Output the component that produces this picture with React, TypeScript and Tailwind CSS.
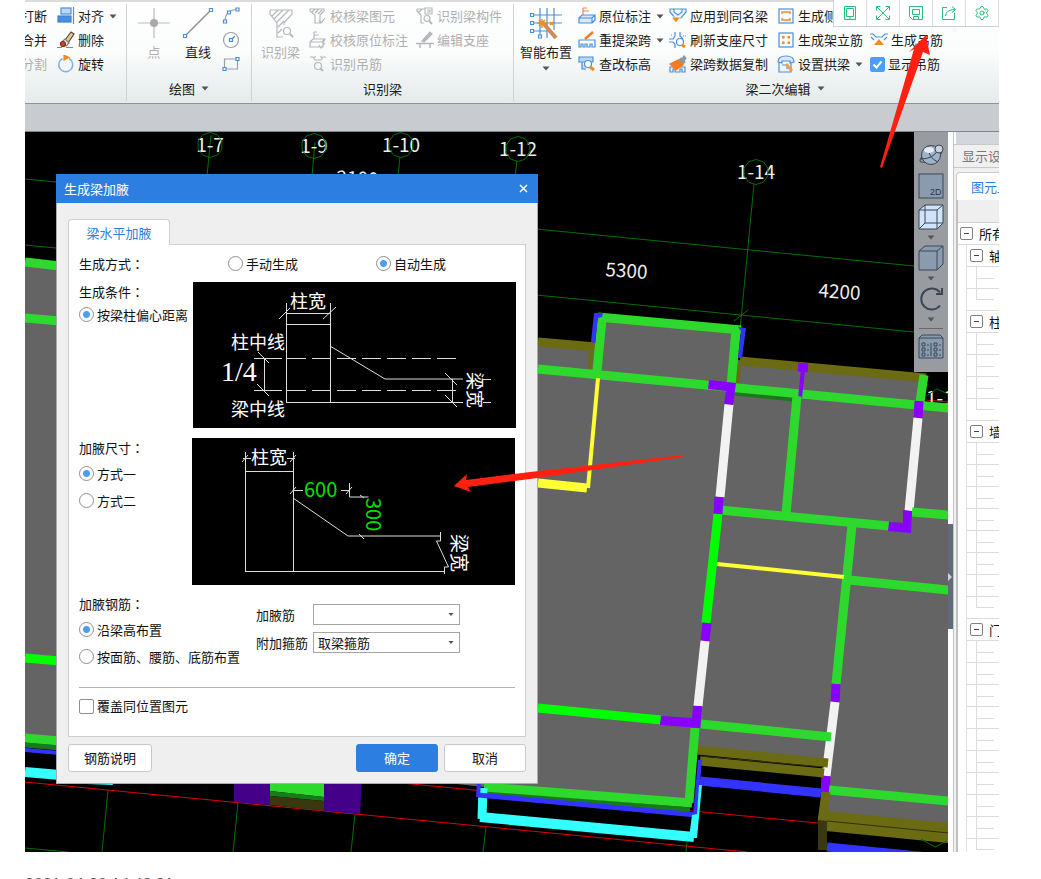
import React from "react";
import { Settings } from "lucide-react";

const BLUE = "#4a90d9";
const GREY = "#b4b8bb";
const ORANGE = "#f08a24";

function Caret({ className = "" }: { className?: string }) {
  return (
    <svg viewBox="0 0 8 5" className={"h-[5px] w-2 shrink-0 " + className} fill="#555">
      <path d="M0.5 0.5h7L4 4.5z" />
    </svg>
  );
}

function Glyph({ children }: { children?: React.ReactNode }) {
  return (
    <svg viewBox="0 0 18 18" className="size-[18px] shrink-0" fill="none" stroke={BLUE} strokeWidth="1.2">
      {children}
    </svg>
  );
}

/* ---------- ribbon glyphs ---------- */
const AlignIcon = (
  <Glyph>
    <rect x="4" y="1" width="10" height="6" fill="#bcd7f5" />
    <rect x="1" y="9" width="13" height="6" fill="#4a90e2" stroke="#3c7fd0" />
    <path d="M16.500 0v17" />
  </Glyph>
);
const EraseIcon = (
  <Glyph>
    <path d="M0 16.500h5M9 16.500h7" stroke="#888" />
    <path d="M8 9l6-8 3 2-6 9z" fill="#e8c890" stroke="#5b4a33" />
    <path d="M5 11l3-3 4 4-3 3z" fill="#fff" stroke="#777" />
    <circle cx="6" cy="13" r="2.500" fill="#c9461f" stroke="#8c2f14" />
  </Glyph>
);
const RotateIcon = (
  <Glyph>
    <path d="M12 3.500a7 7 0 1 1-6.500 0" strokeWidth="1.500" stroke="#7fb0e6" />
    <path d="M7 0l5 2.500-5 2.500z" fill={ORANGE} stroke={ORANGE} />
  </Glyph>
);
const ArcIcon = (
  <Glyph>
    <path d="M3 14.500Q3 3 15 2.500" stroke="#999" />
    <path d="M1.500 13h3v3h-3zM5.500 4h3v3h-3zM14 1h3v3h-3z" fill="#fff" />
  </Glyph>
);
const CircleIcon = (
  <Glyph>
    <circle cx="9" cy="9" r="7.500" stroke="#9aa0a6" />
    <path d="M9 9l4-4" />
    <rect x="7.500" y="7.500" width="3" height="3" fill="#fff" />
  </Glyph>
);
const RectIcon = (
  <Glyph>
    <path d="M2.500 4h13v10h-13z" stroke="#9aa0a6" />
    <path d="M1 12.500h3v3H1zM14 2.500h3v3h-3z" fill="#fff" />
  </Glyph>
);
const FunnelCheck = (
  <Glyph>
    <g stroke={GREY}>
      <path d="M1 2h14v2l-4 4v8H6V8L1 4zM3 5l3-3M6 6l4-4M9 7l4-4" />
      <path d="M10 13l2 3 4-5" />
    </g>
  </Glyph>
);
const BlockGrey = (
  <Glyph>
    <g stroke={GREY}>
      <path d="M1 11l3-3h12l-2 4v4H1zM1 11h12l3-3M5 8V1M5 4h5M5 1h3M10 14l2 3 4-5" />
    </g>
  </Glyph>
);
const HangFind = (
  <Glyph>
    <g stroke={GREY}>
      <path d="M1 2h3l2 3h6l2-3h3M6 1v2M12 1v2" />
      <circle cx="9" cy="11" r="3.500" />
      <path d="M11.500 13.500l2.500 2.500" strokeWidth="2" />
    </g>
  </Glyph>
);
const FunnelFind = (
  <Glyph>
    <g stroke={GREY}>
      <path d="M1 2h8M1 2v2l4 4v8h3M2 6l4-4M9 1h7v6H9zM11 3h3v2h-3" />
      <circle cx="11" cy="11.500" r="3" />
      <path d="M13 14l3 3" strokeWidth="2" />
    </g>
  </Glyph>
);
const EditSeat = (
  <Glyph>
    <g stroke={GREY}>
      <path d="M0 12.500h18M4 13v4M14 13v4" strokeWidth="1.500" />
      <path d="M6 10l8-9 2 2-8 8z" fill={GREY} />
    </g>
  </Glyph>
);
const BlockIcon = (
  <Glyph>
    <path d="M1 11l3-3h13l-3 3v5H1zM1 11h13v5M14 16l3-3V8" fill="#dbeafb" />
    <path d="M5 8V1M5 4h6M5 1h4" stroke="#e58a5a" />
  </Glyph>
);
const SpanIcon = (
  <Glyph>
    <path d="M1 16V9h16v7h-3v-3h-2v3H9v-3H7v3H5v-3H3v3z" fill="#fff" />
    <path d="M7 8l8-7" stroke="#f47b20" strokeWidth="2.500" />
  </Glyph>
);
const QueryIcon = (
  <Glyph>
    <path d="M1 2h14v5H1zM4 7v7h4" fill="#bcd7f5" />
    <circle cx="10" cy="9" r="3.500" fill="#fff" />
    <path d="M12 12l4 3" stroke={ORANGE} strokeWidth="3" />
  </Glyph>
);
const ApplyIcon = (
  <Glyph>
    <path d="M1 2h16v3l-5 6H6L1 5zM5 2v3l4 3 4-3V2" fill="#eaf3fd" />
    <path d="M2.500 10h9L7 16z" fill={ORANGE} stroke="#fff" strokeWidth="0.8" />
  </Glyph>
);
const RefreshIcon = (
  <Glyph>
    <path d="M6 1v4L4 8H0M11 1v4l3 3M6 17v-4l-2-2H0" />
    <path d="M2 4h2M14 5h3" strokeDasharray="1 1" />
    <circle cx="11" cy="11" r="3.500" fill="#fff" />
    <path d="M13 14l3 2" stroke={ORANGE} strokeWidth="3" />
  </Glyph>
);
const BrushIcon = (
  <Glyph>
    <path d="M1 17v-5h15v5h-3v-3h-2v3H6v-3H4v3z" />
    <path d="M10 5l2-2 1 1 2-3 2 2-2 3 1 1-2 2z" fill="#8d98a5" stroke="#8d98a5" />
    <path d="M1 9l8-4 5 5-7 5z" fill="#f47b20" stroke="#f47b20" />
  </Glyph>
);
const SideIcon = (
  <Glyph>
    <rect x="2" y="2" width="14" height="14" fill="#fff" />
    <path d="M5 7V5h8v2M5 11v2h8v-2" stroke={ORANGE} strokeWidth="1.500" />
  </Glyph>
);
const DotsIcon = (
  <Glyph>
    <rect x="2" y="2" width="14" height="14" fill="#fff" />
    <path d="M5 5h2.500v2.500H5zM10.500 5H13v2.500h-2.500zM5 10.500h2.500V13H5zM10.500 10.500H13V13h-2.500z" fill={ORANGE} stroke="none" />
  </Glyph>
);
const ArchIcon = (
  <Glyph>
    <path d="M1 7Q1 1 9 1t8 6l-4 1V6H5v2z" fill="#dbeafb" />
    <path d="M2 8v9h12V8M5 10h5v4" />
    <path d="M9 9l6 7" stroke="#f0a050" strokeWidth="3" />
  </Glyph>
);
const HangIcon = (
  <Glyph>
    <path d="M0 3h3l3 3h6l3-3h3M1 6l3 3M17 6l-3 3" />
    <path d="M9 8l5 6H4z" fill={ORANGE} stroke="none" />
  </Glyph>
);

type ToolProps = { icon?: React.ReactNode; label: string; caret?: boolean; disabled?: boolean };

function Tool({ icon, label, caret, disabled }: ToolProps) {
  return (
    <button
      type="button"
      disabled={disabled}
      className="flex h-6 items-center gap-[3px] whitespace-nowrap text-[#1c1c1c] disabled:text-[#b0b0b0]"
    >
      {icon}
      <span>{label}</span>
      {caret && <Caret className="ml-[2px]" />}
    </button>
  );
}

function BigTool({
  label,
  caret,
  disabled,
  className,
  children,
}: {
  label: string;
  caret?: boolean;
  disabled?: boolean;
  className: string;
  children: React.ReactNode;
}) {
  return (
    <button
      type="button"
      disabled={disabled}
      className={
        "flex shrink-0 flex-col items-center whitespace-nowrap text-[#1c1c1c] disabled:text-[#b0b0b0] " + className
      }
    >
      <svg viewBox="0 0 32 32" className="mt-[3px] size-8" fill="none" strokeWidth="1.2">
        {children}
      </svg>
      <span className="mt-1 leading-[18px]">{label}</span>
      {caret && <Caret className="mt-[5px]" />}
    </button>
  );
}

function Group({
  title,
  caret,
  className,
  children,
}: {
  title?: string;
  caret?: boolean;
  className: string;
  children: React.ReactNode;
}) {
  return (
    <section className={"my-[2px] flex flex-col " + className}>
      <div className="flex h-[72px]">{children}</div>
      <div className="flex flex-1 items-center justify-center gap-[6px] text-[#1c1c1c]">
        {title}
        {caret && <Caret />}
      </div>
    </section>
  );
}

function Ribbon() {
  return (
    <header className="flex h-[104px] shrink-0 overflow-hidden border-t-2 border-b border-t-[#dcdcdc] border-b-[#8c9696] bg-linear-to-b from-white via-[#fbfcfc] to-[#e4eaea]">
      <Group className="w-[102px] shrink-0 border-r border-[#cfd3d3]">
        <div className="flex w-[32px] flex-col items-end overflow-hidden pr-[10px]">
          <Tool label="打断" />
          <Tool label="合并" />
          <Tool label="分割" disabled />
        </div>
        <div className="flex flex-col">
          <Tool icon={AlignIcon} label="对齐" caret />
          <Tool icon={EraseIcon} label="删除" />
          <Tool icon={RotateIcon} label="旋转" />
        </div>
      </Group>

      <Group title="绘图" caret className="w-[125px] shrink-0 border-r border-[#cfd3d3]">
        <BigTool label="点" disabled className="w-[54px]">
          <path d="M0 16h32M16 1v30" stroke="#bbb" />
          <circle cx="16" cy="16" r="4" fill="#aaa" />
        </BigTool>
        <BigTool label="直线" className="w-[34px]">
          <path d="M3 29L29 3" stroke="#888" />
          <path d="M1.500 27.500h3v3h-3zM27.500 1.500h3v3h-3z" fill="#fff" stroke={BLUE} />
        </BigTool>
        <div className="flex flex-col gap-[6px] pt-[3px] pl-[7px]">
          <button type="button" aria-label="弧">{ArcIcon}</button>
          <button type="button" aria-label="圆">{CircleIcon}</button>
          <button type="button" aria-label="矩形">{RectIcon}</button>
        </div>
      </Group>

      <Group title="识别梁" className="w-[262px] shrink-0 border-r border-[#cfd3d3]">
        <BigTool label="识别梁" disabled className="w-[57px]">
          <g stroke={GREY}>
            <path d="M5 3h22v4l-8 9v2M5 3v4l7 9v14h6M7 9l6-6M9 12l9-9M12 15L24 3M13 20l6-6M13 26l4-4" />
            <circle cx="22" cy="24" r="3.500" />
            <path d="M25 27l3 3" strokeWidth="2" />
          </g>
        </BigTool>
        <div className="w-[107px]">
          <Tool icon={FunnelCheck} label="校核梁图元" disabled />
          <Tool icon={BlockGrey} label="校核原位标注" disabled />
          <Tool icon={HangFind} label="识别吊筋" disabled />
        </div>
        <div>
          <Tool icon={FunnelFind} label="识别梁构件" disabled />
          <Tool icon={EditSeat} label="编辑支座" disabled />
        </div>
      </Group>

      <Group title="梁二次编辑" caret className="w-[542px] shrink-0">
        <BigTool label="智能布置" caret className="w-[64px]">
          <path d="M10 1v30M17 1v30M24 1v22M2 8h30M2 16h30M2 24h16" stroke={BLUE} />
          <path d="M0.500 6.500h3v3h-3zM0.500 14.500h3v3h-3zM0.500 22.500h3v3h-3zM8.500 28h3v3h-3z" fill="#fff" stroke={BLUE} />
          <path d="M14 17l12 14" stroke="#d08a58" strokeWidth="4" />
          <path d="M12 12v9M7 16h10M9 13l6 6M15 13l-6 6M20 15l3 3M23 15l-3 3" stroke={ORANGE} strokeWidth="1.500" />
        </BigTool>
        <div className="w-[91px]">
          <Tool icon={BlockIcon} label="原位标注" caret />
          <Tool icon={SpanIcon} label="重提梁跨" caret />
          <Tool icon={QueryIcon} label="查改标高" />
        </div>
        <div className="w-[108px]">
          <Tool icon={ApplyIcon} label="应用到同名梁" />
          <Tool icon={RefreshIcon} label="刷新支座尺寸" />
          <Tool icon={BrushIcon} label="梁跨数据复制" />
        </div>
        <div className="w-[93px]">
          <Tool icon={SideIcon} label="生成侧面筋" />
          <Tool icon={DotsIcon} label="生成架立筋" />
          <Tool icon={ArchIcon} label="设置拱梁" caret />
        </div>
        <div className="pt-6">
          <Tool icon={HangIcon} label="生成吊筋" />
          <label className="relative flex h-6 items-center gap-[3px] text-[#1c1c1c]">
            <input
              type="checkbox"
              defaultChecked
              className="peer size-[15px] appearance-none rounded-[2px] border border-[#8f8f8f] bg-white checked:border-[#4d9df8] checked:bg-[#4d9df8]"
            />
            <svg
              viewBox="0 0 15 15"
              className="pointer-events-none absolute left-0 hidden size-[15px] peer-checked:block"
              fill="none"
              stroke="#fff"
              strokeWidth="2"
            >
              <path d="M3.500 7.500l3 3 5-6" />
            </svg>
            显示吊筋
          </label>
        </div>
      </Group>
    </header>
  );
}

function CaptureBar() {
  const cell = "flex h-[26px] w-[33px] items-center justify-center border-r border-[#dcdfe2]";
  return (
    <div className="absolute top-0 right-0 flex border-b border-l border-[#cfd2d5] bg-white text-[#27c07d]">
      <button type="button" aria-label="手机" className={cell}>
        <svg viewBox="0 0 16 16" className="size-4" fill="none" stroke="currentColor">
          <path d="M2.500 1.500h11v13h-11zM4.500 3.500h7v8h-7zM7 13h2" />
        </svg>
      </button>
      <button type="button" aria-label="全屏" className={cell}>
        <svg viewBox="0 0 16 16" className="size-4" fill="none" stroke="currentColor">
          <path d="M2 2l12 12M14 2L2 14M1.500 5.500v-4h4M10.500 1.500h4v4M1.500 10.500v4h4M14.500 10.500v4h-4" />
        </svg>
      </button>
      <button type="button" aria-label="保存" className={cell}>
        <svg viewBox="0 0 16 16" className="size-4" fill="none" stroke="currentColor">
          <path d="M1.500 1.500h13v13h-10l-3-3zM4.500 4.500h7v5h-7zM5.500 14v-2.500h5V14" />
        </svg>
      </button>
      <button type="button" aria-label="分享" className={cell}>
        <svg viewBox="0 0 16 16" className="size-4" fill="none" stroke="currentColor">
          <path d="M6 2.500H1.500v12h12V8M4.500 11Q5 4.500 14 4.500M11 1.500l3.500 3-3.500 3" />
        </svg>
      </button>
      <button type="button" aria-label="设置" className={cell}>
        <Settings className="size-4" strokeWidth={1.5} />
      </button>
    </div>
  );
}

/* ---------- model canvas ---------- */
type Seg = [string, number, number, number, number, number];
const G = "#2dd92d";
const L = "#00ff00";
const P = "#8800ff";
const W = "#f2f2f2";
const O = "#6b6b14";
const B = "#3333ff";
const Y = "#ffff33";
const C = "#33ffff";
const D = "#1a7a1a";

const axes: Seg[] = [
  ["#007000", 25, 179, 914, 266, 1],
  ["#007000", 25, 245, 914, 332, 1],
  ["#007000", 754, 184, 740, 330, 1],
  ["#007000", 734, 321, 748, 310, 1],
  ["#007000", 211, 135, 207, 176, 1],
  ["#007000", 315, 142, 312, 176, 1],
  ["#007000", 400, 157, 398, 176, 1],
  ["#007000", 517, 161, 515, 176, 1],
  ["#007000", 108, 790, 102, 852, 1],
  ["#007000", 238, 803, 233, 852, 1],
  ["#007000", 355, 814, 351, 852, 1],
  ["#007000", 486, 827, 483, 852, 1],
  ["#007000", 687, 842, 686, 852, 1],
  ["#007000", 25, 848, 68, 852, 1],
  ["#e00000", 25, 782, 747, 852, 1],
  ["#e00000", 401, 783, 818, 823, 1],
  ["#e00000", 926, 400, 949, 402, 1],
];

const beams: Seg[] = [
  [G, 25, 262, 60, 266, 9],
  [G, 25, 318, 60, 321, 9],
  [L, 25, 658, 60, 661, 9],
  [D, 25, 745, 60, 748, 5],
  [G, 25, 738, 60, 741, 9],
  [B, 25, 750, 60, 753, 4],
  [C, 25, 772, 60, 775, 10],
  [C, 60, 778, 113, 780, 10],
  [O, 538, 342, 596, 347, 9],
  [O, 591, 350, 590, 369, 4],
  [O, 740, 361, 926, 378, 9],
  [O, 739, 364, 737, 384, 4],
  [D, 734, 393, 793, 399, 5],
  [G, 538, 369, 949, 408, 9],
  [G, 602, 319, 597, 371, 9],
  [G, 598, 317, 741, 330, 9],
  [G, 736, 330, 731, 386, 9],
  [P, 798, 367, 808, 368, 9],
  [P, 803, 370, 800, 398, 4],
  [G, 924, 375, 920, 402, 9],
  [P, 919, 401, 918, 418, 9],
  [W, 918, 418, 909, 511, 9],
  [G, 912, 512, 949, 515, 9],
  [G, 797, 396, 786, 514, 9],
  [G, 720, 510, 889, 526, 9],
  [G, 852, 525, 836, 684, 9],
  [P, 836, 684, 835, 702, 9],
  [W, 835, 702, 826, 776, 9],
  [P, 826, 776, 825, 794, 9],
  [W, 729, 404, 720, 497, 9],
  [P, 719, 497, 718, 514, 9],
  [L, 718, 514, 706, 623, 9],
  [P, 707, 623, 705, 641, 9],
  [W, 705, 641, 698, 706, 9],
  [Y, 717, 564, 844, 577, 4],
  [G, 849, 580, 949, 590, 9],
  [Y, 598, 378, 588, 488, 4],
  [Y, 538, 483, 587, 488, 9],
  [L, 538, 708, 661, 720, 9],
  [G, 701, 724, 831, 737, 9],
  [O, 698, 750, 828, 763, 9],
  [O, 700, 761, 824, 773, 9],
  ["#33330a", 700, 756, 824, 767, 1],
  [B, 700, 781, 821, 793, 9],
  [G, 829, 790, 949, 801, 9],
  [D, 486, 793, 690, 810, 5],
  [G, 484, 787, 692, 803, 9],
  [G, 695, 728, 689, 803, 9],
  [C, 483, 788, 482, 819, 9],
  [C, 480, 817, 694, 837, 10],
  [B, 479, 780, 478, 797, 4],
  [B, 478, 795, 697, 815, 5],
  [B, 700, 760, 695, 815, 4],
  [O, 826, 792, 822, 822, 9],
  [B, 827, 847, 949, 859, 9],
];

const polys: [string, string][] = [
  [P, "709,380 736,383 733,405 724,404 726,391 708,389"],
  [P, "903,510 912,511 911,533 888,531 889,522 903,523"],
  [P, "693,706 702,706 700,728 660,725 661,716 692,718"],
  [B, "594,313 603,313 602,317 598,318 595,343 591,342"],
  [B, "738,327 746,328 742,358 738,358 741,331"],
  [C, "699,785 702,785 697,838 689,838 692,815 697,814"],
  [O, "826,811 949,823 949,843 826,831"],
  ["#3a3810", "818,820 827,821 827,850 818,850"],
  ["#440088", "234,780 270,780 270,805 234,802"],
  ["#440088", "324,780 362,780 360,814 324,811"],
  [G, "270,780 324,780 324,797 270,791"],
  [D, "270,791 324,797 324,801 270,796"],
  ["#3a3810", "270,796 324,801 324,811 270,805"],
];

const bubbles: [number, number, string][] = [
  [210, 145, "1-7"],
  [314, 146, "1-9"],
  [401, 145, "1-10"],
  [518, 149, "1-12"],
  [756, 172, "1-14"],
];

function decagon(cx: number, cy: number) {
  return Array.from({ length: 10 }, (_, i) => {
    const a = (Math.PI / 5) * i + Math.PI / 2;
    return `${cx + 12.5 * Math.cos(a)},${cy + 12.5 * Math.sin(a)}`;
  }).join(" ");
}

function segs(list: Seg[]) {
  return list.map(([color, x1, y1, x2, y2, w], i) => (
    <line key={i} x1={x1} y1={y1} x2={x2} y2={y2} stroke={color} strokeWidth={w} />
  ));
}

function ModelCanvas() {
  return (
    <svg
      viewBox="25 132 924 720"
      preserveAspectRatio="xMinYMin slice"
      className="absolute inset-0 size-full bg-black font-['Noto_Sans_CJK_SC','Noto_Sans',sans-serif] text-[19px]"
    >
      <polygon
        fill="#646464"
        points="25,262 60,265 60,342 538,342 596,347 602,317 741,330 738,360 926,378 922,402 949,408 949,828 828,816 825,765 698,750 690,803 484,787 60,741 25,738"
      />
      {segs(axes)}
      <text x="926" y="405" fill="#eee">1-1</text>
      <polyline points="926,396 937,389 948,394" fill="none" stroke="#007000" />
      {segs(beams)}
      {polys.map(([fill, points], i) => (
        <polygon key={i} fill={fill} points={points} />
      ))}
      <path d="M827 821L949 833" stroke="#33330a" />
      <path d="M921 839l14 8 12-6" stroke="#007000" fill="none" />
      {bubbles.map(([x, y, label]) => (
        <g key={label}>
          <text x={x} y={y + 7} fill="#eee" textAnchor="middle">{label}</text>
          <polygon points={decagon(x, y)} fill="none" stroke="#007000" />
        </g>
      ))}
      <g fill="#eee">
        <text x="336" y="184" transform="rotate(3 336 184)">2100</text>
        <text x="605" y="276" transform="rotate(4 605 276)">5300</text>
        <text x="818" y="297" transform="rotate(4 818 297)">4200</text>
      </g>
    </svg>
  );
}

function ViewBar() {
  const line = "#3a4656";
  const fill = "#8a9bb0";
  return (
    <div className="absolute top-0 right-0 flex w-[34px] flex-col items-center bg-[#989ba0] pt-[10px] pb-[13px]">
      <button type="button" aria-label="动态观察">
        <svg viewBox="0 0 26 26" className="block size-[26px]" fill={fill} stroke={line}>
          <ellipse cx="13" cy="14" rx="12" ry="4" transform="rotate(-25 13 14)" fill="none" />
          <circle cx="13" cy="13" r="9.500" fill="#9fb3c8" />
          <path d="M3 17q12 0 17-9M10 4q0 12 10 16" fill="none" />
          <ellipse cx="11" cy="8" rx="5" ry="3" fill="#e4edf7" stroke="none" />
          <circle cx="21" cy="7" r="4" fill="#c6d3e0" />
        </svg>
      </button>
      <button type="button" aria-label="二维" className="mt-[5px]">
        <svg viewBox="0 0 26 26" className="block size-[26px]" fill={fill} stroke={line}>
          <rect x="1" y="1" width="24" height="24" />
          <text x="12" y="22" fill="#2b3440" stroke="none" className="font-['Liberation_Sans'] text-[9px]">2D</text>
        </svg>
      </button>
      <button type="button" aria-label="线框" className="mt-[5px] flex flex-col items-center">
        <svg viewBox="0 0 26 26" className="block size-[26px]" fill="#cfe4fb" stroke={line}>
          <path d="M1 6l6-5h18v18l-6 6H1z" />
          <path d="M1 6h18v19M19 6l6-5M7 1v18h18M7 19l-6 6" fill="none" />
        </svg>
        <Caret className="mt-[5px]" />
      </button>
      <button type="button" aria-label="实体" className="mt-[5px] flex flex-col items-center">
        <svg viewBox="0 0 26 26" className="block size-[26px]" fill={fill} stroke={line}>
          <path d="M1 6l6-5h18v18l-6 6H1z" />
          <path d="M1 6h18v19M19 6l6-5" fill="none" />
        </svg>
        <Caret className="mt-[5px]" />
      </button>
      <button type="button" aria-label="旋转视图" className="mt-[5px] flex flex-col items-center">
        <svg viewBox="0 0 26 26" className="block size-[26px]" fill="none" stroke={line} strokeWidth="2">
          <path d="M22 6.500A10.500 10.500 0 1 0 22 19.500" />
          <path d="M24 2v6h-6" />
        </svg>
        <Caret className="mt-[5px]" />
      </button>
      <div className="mt-[6px] h-px w-6 bg-[#666]" />
      <button type="button" aria-label="显示列表" className="mt-1">
        <svg viewBox="0 0 26 26" className="block size-[26px]" fill={fill} stroke={line}>
          <path d="M1 5l3-3h18l3 3v20H1zM1 5h24" />
          <path d="M13 10v13M4 10h3v3H4zM4 15h3v3H4zM4 20h3v3H4zM16 10h3v3h-3zM16 15h3v3h-3zM16 20h3v3h-3zM9 12h2M9 17h2M9 22h2M21 12h2M21 17h2M21 22h2" fill="none" />
        </svg>
      </button>
    </div>
  );
}

/* ---------- dialog ---------- */
function Radio({ name, label, checked }: { name: string; label: string; checked?: boolean }) {
  return (
    <label className="flex h-[27px] items-center gap-[3px] whitespace-nowrap">
      <input
        type="radio"
        name={name}
        defaultChecked={checked}
        className="size-[15px] appearance-none rounded-full border border-[#8f8f8f] bg-white checked:bg-[radial-gradient(circle,#4a9cf5_3px,#fff_4px)]"
      />
      {label}
    </label>
  );
}

function Heading({ children, className = "" }: { children: React.ReactNode; className?: string }) {
  return (
    <p className={"h-[19px] leading-[19px] whitespace-nowrap " + className}>
      {children}
      <span className="font-['Noto_Sans_CJK_TC',sans-serif]">：</span>
    </p>
  );
}

function ConditionDiagram() {
  return (
    <svg
      viewBox="193 282 323 146"
      className="h-[146px] w-[323px] shrink-0 bg-black font-['Noto_Sans_CJK_SC',sans-serif] text-[18px]"
      fill="none"
      stroke="#ddd"
      strokeWidth="1"
    >
      <path d="M286.500 303v99M330.500 303v99M286 324.500h44M286 313.500h44M279 319l11-11M323 319l13-12M286 402.500h177M483 402.500h8M483 379.500h8" />
      <path d="M254 358.500h205M254 390.500h205" strokeDasharray="19 6" strokeDashoffset="-8" />
      <path d="M254 358.500h28M254 390.500h28M264.500 358v32M258 352l11 11M257 384l12 12" />
      <path d="M330 346l55 33h78M452.500 379v23M445 373l12 12M445 395l12 12" />
      <g fill="#fff" stroke="none">
        <text x="290" y="308">柱宽</text>
        <text x="231" y="349">柱中线</text>
        <text x="231" y="416">梁中线</text>
        <text x="221" y="381" className="font-['Liberation_Serif',serif] text-[28px]">1/4</text>
        <text transform="translate(468 372) rotate(90)">梁宽</text>
      </g>
    </svg>
  );
}

function SizeDiagram() {
  return (
    <svg
      viewBox="192 438 323 147"
      className="-ml-px h-[147px] w-[323px] shrink-0 bg-black font-['Noto_Sans_CJK_SC',sans-serif] text-[18px]"
      fill="none"
      stroke="#ddd"
      strokeWidth="1"
    >
      <path d="M245.500 452v119M293.500 452v119M245 471.500h48M245 571.500h200M243 458.500h8M287 458.500h8M242 462l6-7M290 462l6-7" />
      <path d="M293 490.500h10M341 490.500h9M290 494l6-7M346 494l6-7M349.500 483v14h19M360 495l4 3M359 534l5 5" />
      <path d="M293 498l55 38h92M440.500 532v9h-4l12 26h-4v7" />
      <g fill="#fff" stroke="none">
        <text x="251" y="464">柱宽</text>
        <text transform="translate(452 534) rotate(90)" className="text-[19px]">梁宽</text>
        <g fill="#00e000" className="text-[20px]">
          <text x="304" y="497">600</text>
          <text transform="translate(366 498) rotate(90)">300</text>
        </g>
      </g>
    </svg>
  );
}

function Combo({ id, label, value }: { id: string; label: string; value: string }) {
  return (
    <div className="flex h-[21px] items-center">
      <label htmlFor={id} className="w-[57px] whitespace-nowrap">{label}</label>
      <div className="relative">
        <select
          id={id}
          defaultValue={value}
          className="block h-[21px] w-[147px] appearance-none border border-[#a5a5a5] bg-white pl-1 leading-[17px]"
        >
          <option value={value}>{value}</option>
        </select>
        <Caret className="pointer-events-none absolute top-2 right-[5px] scale-75" />
      </div>
    </div>
  );
}

function HaunchDialog() {
  const button = "h-7 rounded-[3px] border";
  return (
    <div
      role="dialog"
      aria-label="生成梁加腋"
      className="absolute top-[42px] left-[31px] flex w-[482px] flex-col border border-t-0 border-[#a9adb1] bg-[#efefef] text-[#111]"
    >
      <div className="-mx-px flex h-[29px] items-center justify-between bg-[#2c7fe0] px-2 text-white">
        <span>生成梁加腋</span>
        <button type="button" aria-label="关闭">
          <svg viewBox="0 0 9 9" className="mr-[2px] size-[9px]" stroke="#fff" strokeWidth="1.500">
            <path d="M1 1l7 7M8 1L1 8" />
          </svg>
        </button>
      </div>
      <div className="px-[11px] pt-4">
        <button
          type="button"
          role="tab"
          className="relative -mb-px block h-[26px] w-[102px] rounded-t-[4px] border border-b-0 border-[#cbd0d5] bg-white text-[#2c7fe0]"
        >
          梁水平加腋
        </button>
        <div className="border border-[#cbd0d5] bg-white px-[10px] pt-[5px] pb-[22px]">
          <div className="flex items-center">
            <Heading className="w-[149px]">生成方式</Heading>
            <div className="w-[148px]">
              <Radio name="mode" label="手动生成" />
            </div>
            <Radio name="mode" label="自动生成" checked />
          </div>
          <div className="mt-[5px] flex">
            <div className="w-[114px] shrink-0">
              <Heading>生成条件</Heading>
              <Radio name="cond" label="按梁柱偏心距离" checked />
            </div>
            <ConditionDiagram />
          </div>
          <div className="mt-[10px] flex">
            <div className="w-[114px] shrink-0">
              <Heading className="mb-[3px]">加腋尺寸</Heading>
              <Radio name="size" label="方式一" checked />
              <Radio name="size" label="方式二" />
            </div>
            <SizeDiagram />
          </div>
          <div className="mt-[9px] flex">
            <div className="w-[177px] shrink-0">
              <Heading className="mb-[3px]">加腋钢筋</Heading>
              <Radio name="rebar" label="沿梁高布置" checked />
              <Radio name="rebar" label="按面筋、腰筋、底筋布置" />
            </div>
            <div className="flex flex-col gap-[7px] pt-[10px]">
              <Combo id="haunch-bar" label="加腋筋" value="" />
              <Combo id="stirrup" label="附加箍筋" value="取梁箍筋" />
            </div>
          </div>
          <hr className="mt-[17px] border-[#b5b5b5]" />
          <label className="mt-[10px] flex h-4 items-center gap-[3px]">
            <input type="checkbox" className="size-[15px] appearance-none rounded-[2px] border border-[#8f8f8f] bg-white" />
            覆盖同位置图元
          </label>
        </div>
        <div className="flex gap-[6px] pt-[7px] pb-[11px]">
          <button type="button" className={button + " mr-auto w-[84px] border-[#c9c9c9] bg-white"}>钢筋说明</button>
          <button type="button" className={button + " w-[82px] border-[#2c7fe0] bg-[#2c7fe0] text-white"}>确定</button>
          <button type="button" className={button + " w-[82px] border-[#c9c9c9] bg-white"}>取消</button>
        </div>
      </div>
    </div>
  );
}

/* ---------- side panel ---------- */
const tree: { name: string; children: number }[] = [
  { name: "轴线", children: 2 },
  { name: "柱", children: 4 },
  { name: "墙", children: 8 },
  { name: "门窗洞", children: 10 },
];

function Toggle() {
  return (
    <button
      type="button"
      aria-label="折叠"
      className="relative flex size-[13px] shrink-0 items-center justify-center rounded-[2px] border border-[#808080] bg-white"
    >
      <span className="h-px w-[5px] bg-[#444]" />
    </button>
  );
}

function SidePanel() {
  return (
    <aside className="flex w-[46px] shrink-0 flex-col overflow-hidden border-l border-[#c4c4c4] bg-[#f0f0f0] whitespace-nowrap">
      <div className="h-3 shrink-0 border-l-2 border-white bg-[#d3d7dc]" />
      <div className="h-6 shrink-0 border-y border-[#c8c8c8] pl-2 leading-[22px] text-[#777]">显示设置</div>
      <div className="shrink-0 pt-1 pl-[2px]">
        <button
          type="button"
          className="block h-7 w-[90px] rounded-tl-[4px] border-t border-l border-[#c8ccd0] bg-white pl-[14px] text-left text-[#2c7fe0]"
        >
          图元显示
        </button>
      </div>
      <div className="ml-[2px] flex-1 border-l-2 border-[#c0c0c0] bg-white">
        <div className="h-[23px] border-b border-[#d0d0d0] bg-[#efefef]" />
        <div className="flex h-[22px] items-center gap-[6px] border-b border-[#dcdcdc] pl-[2px]">
          <Toggle />
          所有构件
        </div>
        <ul className="ml-2 border-l border-[#e2e2e2]">
          {tree.map((node) => (
            <li key={node.name}>
              <div className="flex h-[22px] items-center gap-[6px] border-b border-[#dcdcdc] pl-[3px]">
                <Toggle />
                {node.name}
              </div>
              <ul>
                {Array.from({ length: node.children }, (_, i) => (
                  <li key={i} className="h-[22px] border-b border-[#dcdcdc]">
                    <div
                      className={
                        "ml-[9px] w-[18px] border-l border-[#dcdcdc] " +
                        (i === node.children - 1 ? "h-[11px] border-b" : "flex h-[22px] items-center")
                      }
                    >
                      {i < node.children - 1 && <div className="h-px w-full bg-[#dcdcdc]" />}
                    </div>
                  </li>
                ))}
              </ul>
            </li>
          ))}
        </ul>
      </div>
    </aside>
  );
}

function Pointers() {
  return (
    <svg
      viewBox="25 0 974 852"
      preserveAspectRatio="xMinYMin meet"
      className="pointer-events-none absolute inset-0 size-full"
      fill="#ff2012"
    >
      <path d="M926 35l4 20-7-3-41 116-2-1 34-118-5 3z" />
      <path d="M454 486l13-12-1 6 64-8 153-17v2l-153 22-62 8 3 5z" />
    </svg>
  );
}

export default function App() {
  return (
    <div className="flex h-screen min-h-[600px] flex-col overflow-hidden bg-white font-['Noto_Sans_CJK_SC','Noto_Sans',sans-serif] text-[13px] text-[#111]">
      <main className="relative mr-[42px] ml-[25px] flex flex-1 flex-col overflow-hidden">
        <Ribbon />
        <div className="h-7 shrink-0 border-b border-[#7f858a] bg-[#c8ccd1]" />
        <div className="flex min-h-0 flex-1">
          <div className="relative min-w-0 flex-1 overflow-hidden">
            <ModelCanvas />
            <ViewBar />
            <HaunchDialog />
          </div>
          <div className="flex w-[5px] shrink-0 flex-col bg-white pt-[392px]">
            <button type="button" aria-label="收起面板" className="flex h-[105px] items-center bg-[#5f6b7a]">
              <svg viewBox="0 0 4 8" className="h-2 w-1" fill="#ccd2d9">
                <path d="M0 0l4 4-4 4z" />
              </svg>
            </button>
          </div>
          <SidePanel />
        </div>
        <CaptureBar />
        <Pointers />
      </main>
      <footer className="ml-[25px] h-[27px] shrink-0 overflow-hidden pt-[21px] font-['Liberation_Sans',sans-serif] text-base text-[#555]">
        <time>2021-04-20 14:42:31</time>
      </footer>
    </div>
  );
}
